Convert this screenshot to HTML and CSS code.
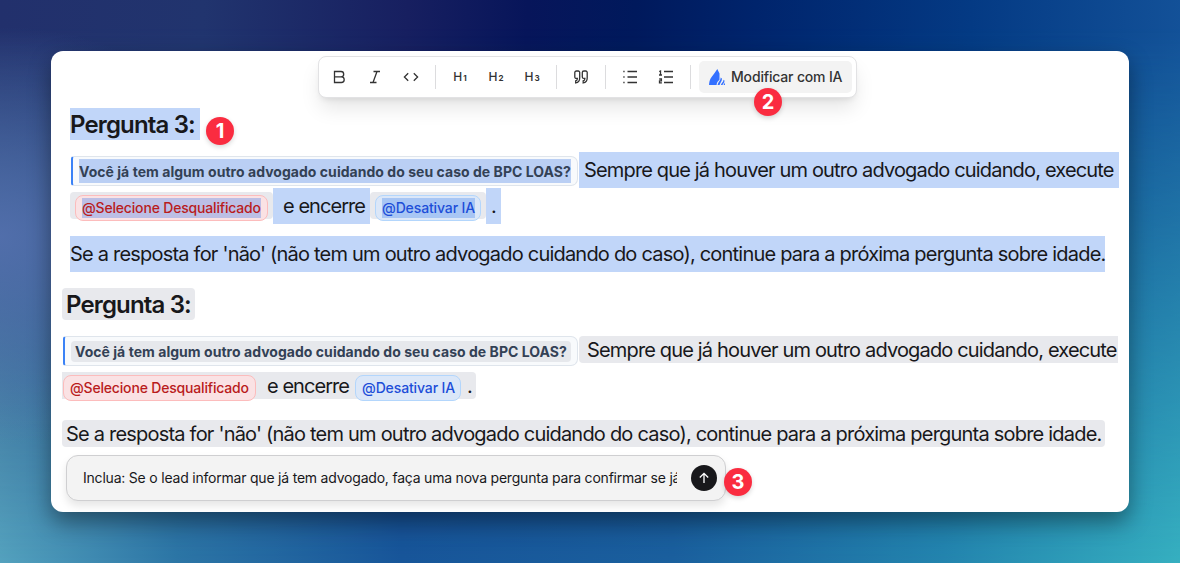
FILE: index.html
```
<!DOCTYPE html>
<html lang="pt-BR">
<head>
  <meta charset="UTF-8">
  <meta name="viewport" content="width=device-width, initial-scale=1.0">
  <title>Editor de instruções</title>
  <link rel="stylesheet" href="styles.css">
</head>
<body>

<div class="card">

  <!-- Formatting toolbar -->
  <div class="toolbar">
    <button class="tool" aria-label="Negrito">
      <svg width="16" height="16" viewBox="0 0 16 16"><path d="M3.5 2.500h6.500a2.700 2.700 0 0 1 0 5.400H3.500zM3.500 7.900h6.900a2.800 2.800 0 0 1 0 5.600H3.500z"/></svg>
    </button>
    <button class="tool" aria-label="Itálico">
      <svg width="16" height="16" viewBox="0 0 16 16"><path d="M6.500 2.500h6.500M3 13.500h6.500M10 2.500l-4 11"/></svg>
    </button>
    <button class="tool" aria-label="Código">
      <svg width="16" height="16" viewBox="0 0 16 16"><path d="M5.200 4.200 1.400 8l3.800 3.800M10.800 4.200 14.600 8l-3.800 3.800"/></svg>
    </button>
    <span class="divider"></span>
    <button class="tool heading-tool">H<small>1</small></button>
    <button class="tool heading-tool">H<small>2</small></button>
    <button class="tool heading-tool">H<small>3</small></button>
    <span class="divider"></span>
    <button class="tool" aria-label="Citação">
      <svg width="16" height="16" viewBox="0 0 16 16"><path d="M6.700 4v5c0 3-1.200 4.500-4 4.900v-2.100c1.200-.3 1.700-1 1.700-2.400H3.300a1.500 1.500 0 0 1-1.500-1.500V3.600A1.600 1.600 0 0 1 3.400 2h1.700a1.600 1.600 0 0 1 1.600 2zM14.200 4v5c0 3-1.200 4.500-4 4.900v-2.100c1.200-.3 1.700-1 1.700-2.400h-1.100a1.500 1.500 0 0 1-1.500-1.500V3.600A1.600 1.600 0 0 1 10.900 2h1.700a1.600 1.600 0 0 1 1.600 2z"/></svg>
    </button>
    <span class="divider"></span>
    <button class="tool" aria-label="Lista">
      <svg width="16" height="16" viewBox="0 0 16 16"><path d="M5.500 2.500H15M5.500 8H15M5.500 13.500H15M1.300 2.500h1.300M1.300 8h1.300M1.300 13.500h1.300"/></svg>
    </button>
    <button class="tool" aria-label="Lista numerada">
      <svg width="16" height="16" viewBox="0 0 16 16"><path d="M6 2.500h9M6 8h9M6 13.500h9M1.200 2.500l1.300-.5v4M1 6h3M1.200 10h2.200v1.900H1.500v2h2.400"/></svg>
    </button>
    <span class="divider"></span>
    <button class="ai-button">
      <svg class="ai-logo" width="16" height="16" viewBox="0 0 16 16"><path d="M8.300 0C6.200 3.600 3.500 6.300 1.600 9.500.6 11.400.2 13.600 0 16h7.600c.2-2.300 1-3.600 2.900-5.200V4.500zM11.600 8.500c.3 3.100-2.600 4.400-3 7.500h2c.6-2.600 2.700-4 2.300-6.500zM14.500 10.700c.2 2-2.300 3.300-2.700 5.300h1.700c.6-1.500 2.200-2.600 2-4.500zM15.800 13.300c-.2 1.100-.9 1.700-1.300 2.700h1.500z"/></svg>
      <span>Modificar com IA</span>
    </button>
    <span class="badge badge-ai">2</span>
  </div>

  <!-- Selected text -->
  <div class="block selected">
    <div class="title-row">
      <h2>Pergunta 3:</h2>
      <span class="badge badge-title">1</span>
    </div>
    <div class="line">
      <span class="question"><b>Você já tem algum outro advogado cuidando do seu caso de BPC LOAS?</b></span>
      <span class="text text-rule">Sempre que já houver um outro advogado cuidando, execute</span>
    </div>
    <div class="line">
      <span class="chip-bg"><span class="chip red"><b>@Selecione Desqualificado</b></span></span>
      <span class="text text-and">e encerre</span>
      <span class="chip-bg"><span class="chip blue"><b>@Desativar IA</b></span></span>
      <span class="text text-dot">.</span>
    </div>
    <div class="line last">
      <span class="text text-answer">Se a resposta for 'não' (não tem um outro advogado cuidando do caso), continue para a próxima pergunta sobre idade.</span>
    </div>
  </div>

  <!-- Same text, as sent to the assistant -->
  <div class="block marked">
    <div class="title-row">
      <h2>Pergunta 3:</h2>
    </div>
    <div class="line">
      <span class="question"><b>Você já tem algum outro advogado cuidando do seu caso de BPC LOAS?</b></span>
      <span class="text text-rule">Sempre que já houver um outro advogado cuidando, execute</span>
    </div>
    <div class="line">
      <span class="mark-run">
        <span class="chip red"><b>@Selecione Desqualificado</b></span>
        <span class="run-text">e encerre</span>
        <span class="chip blue"><b>@Desativar IA</b></span>
        <span class="run-dot">.</span>
      </span>
    </div>
    <div class="line last">
      <span class="text text-answer">Se a resposta for 'não' (não tem um outro advogado cuidando do caso), continue para a próxima pergunta sobre idade.</span>
    </div>
  </div>

  <!-- Prompt -->
  <div class="prompt">
    <div class="prompt-text">Inclua: Se o lead informar que já tem advogado, faça uma nova pergunta para confirmar se já</div>
    <button class="send" aria-label="Enviar">
      <svg width="14" height="14" viewBox="0 0 14 14"><path d="M7 12V2.500M2.800 6.500 7 2.300l4.200 4.200"/></svg>
    </button>
    <span class="badge badge-prompt">3</span>
  </div>

</div>

</body>
</html>
```
FILE: styles.css
```
* {
  box-sizing: border-box;
}
body {
  margin: 0;
  height: 563px;
  padding: 51px;
  overflow: hidden;
  font-family: Inter, "Liberation Sans", sans-serif;
  color: #18181b;
  background: linear-gradient(92deg, #22306c 0%, #21346e 17%, #171f60 34%, #07155a 44%, #00195c 53%, #00246c 63%, #043a84 81%, #14539a 100%);
}
/* lighter lower half of the backdrop */
body::before {
  content: "";
  position: absolute;
  inset: 0;
  z-index: -1;
  background: linear-gradient(90deg, #54a2be 0%, #2c76a6 15%, #17569a 34%, #1a609e 57%, #2385ae 80%, #36b0c0 100%);
  mask-image: linear-gradient(to bottom, transparent 5%, #000 100%);
}
body::after {
  content: "";
  position: absolute;
  inset: 0;
  z-index: -1;
  background: radial-gradient(ellipse 260px 210px at 0 42%, rgba(84, 112, 174, 0.9), rgba(84, 112, 174, 0) 100%);
}
h2 {
  margin: 0;
  height: 32px;
  font-size: 24px;
  font-weight: 600;
  line-height: 34px;
  letter-spacing: -0.85px;
  white-space: nowrap;
}
button {
  border: 0;
  padding: 0;
  background: none;
  font-family: inherit;
  color: #333;
}
svg {
  display: block;
  fill: none;
  stroke: currentColor;
  stroke-width: 1.3;
}
.card {
  width: 1078px;
  height: 461px;
  padding-top: 5px;
  background: #fff;
  border-radius: 12px;
  box-shadow: 0 10px 22px rgba(0, 0, 0, 0.4);
}

/* toolbar */
.toolbar {
  position: relative;
  display: flex;
  align-items: center;
  width: 539px;
  height: 42px;
  margin-left: 267px;
  padding: 0 4px 0 2px;
  background: #fff;
  border: 1px solid #e2e2e4;
  border-radius: 8px;
  box-shadow: 0 12px 20px -2px rgba(0, 0, 0, 0.1), 0 4px 6px -3px rgba(0, 0, 0, 0.1);
}
.tool {
  display: flex;
  justify-content: center;
  align-items: center;
  width: 36px;
  height: 32px;
}
.divider {
  width: 1px;
  height: 24px;
  margin: 0 6px;
  background: #dcdcde;
}
.heading-tool {
  align-items: baseline;
  padding-top: 9px;
  font-size: 12px;
  line-height: 14px;
  font-weight: 500;
}
.heading-tool small {
  margin-left: 1px;
  font-size: 8px;
  font-weight: 700;
}
.ai-button {
  display: flex;
  align-items: center;
  gap: 6px;
  width: 153px;
  height: 32px;
  margin-left: 2px;
  padding: 0 0 1px 10px;
  background: #f3f3f3;
  border-radius: 5px;
  font-size: 14px;
  font-weight: 500;
  letter-spacing: -0.17px;
  white-space: nowrap;
}
.ai-logo {
  margin-top: 1px;
  fill: #3370ff;
  stroke: none;
}
.badge {
  display: flex;
  justify-content: center;
  align-items: center;
  width: 28px;
  height: 28px;
  border-radius: 50%;
  background: #fa2c40;
  color: #fff;
  font-size: 20px;
  font-weight: 700;
  line-height: 28px;
  box-shadow: 0 2px 5px rgba(0, 0, 0, 0.16);
}
.badge-ai {
  position: absolute;
  left: 435px;
  top: 31px;
}
.badge-title {
  margin: 9px 0 0 6px;
}
.badge-prompt {
  position: absolute;
  left: 657px;
  top: 12px;
}

/* editor text */
.title-row {
  display: flex;
  height: 32px;
  margin-bottom: 12px;
}
.line {
  display: flex;
  align-items: center;
  height: 36px;
}
.line.last {
  margin-top: 12px;
}
.text {
  font-size: 20px;
  line-height: 36px;
  white-space: nowrap;
}
.text-rule {
  letter-spacing: -0.84px;
}
.text-answer {
  letter-spacing: -0.79px;
}
.question {
  display: flex;
  align-items: center;
  width: 506px;
  height: 30px;
  padding-left: 6px;
  border: 1px solid #dfe5ec;
  border-left: 2px solid #3b82f6;
  border-radius: 3px 7px 7px 3px;
  background: #f8fafc;
  font-size: 14px;
  color: #334155;
}
.question b {
  width: 492px;
  height: 24px;
  line-height: 25px;
  font-weight: 700;
  letter-spacing: 0.04px;
  white-space: nowrap;
}
.chip {
  display: flex;
  align-items: center;
  height: 26px;
  padding: 0 6px;
  border: 1px solid;
  border-radius: 8px;
  font-size: 14px;
  white-space: nowrap;
}
.chip b {
  height: 20px;
  line-height: 20px;
  font-weight: 500;
  letter-spacing: -0.18px;
}
.red {
  width: 193px;
  color: #b91c1c;
  background: #fae2e4;
  border-color: #fcbcbc;
}
.blue {
  width: 106px;
  color: #1d4ed8;
  background: #dbe7f8;
  border-color: #b3d6fc;
}
.blue b {
  letter-spacing: -0.12px;
}

.selected {
  margin: 10px 0 0 19px;
}
.selected h2 {
  width: 130px;
  background: #c1d6f9;
}
.selected .text {
  background: #c1d6f9;
}
.selected .question {
  width: 507px;
  margin: 2px 1px 0;
}
.selected .question b {
  background: #bacff4;
}
.selected .text-rule {
  width: 540px;
  padding-left: 5px;
}
.selected .text-and {
  width: 97px;
  padding-left: 10px;
}
.selected .text-dot {
  width: 15px;
  padding-left: 5px;
}
.selected .text-answer {
  width: 1035px;
}
.chip-bg {
  height: 27px;
  margin-top: -1px;
  padding: 3px 5px 0;
  background: #e8e9ed;
  border-radius: 4px;
}
.selected .red b {
  background: #bcbfe5;
}
.selected .blue b {
  background: #a8c6f4;
}
.text-and,
.run-text {
  letter-spacing: -0.95px;
}

.marked {
  margin: 16px 0 0 11px;
}
.marked h2 {
  width: 133px;
  padding-left: 4px;
  background: #e8e9ed;
  border-radius: 4px;
}
.marked .question {
  margin: 2px 1px 0;
  width: 515px;
}
.marked .question b {
  width: 500px;
  height: 21px;
  padding-left: 4px;
  line-height: 21px;
  background: #e6e8ec;
  border-radius: 4px;
}
.marked .text {
  height: 27px;
  margin-top: -1px;
  line-height: 28px;
  background: #e8e9ed;
  border-radius: 4px;
}
.marked .text-rule {
  width: 539px;
  padding-left: 8px;
  border-radius: 4px 0 0 4px;
}
.marked .text-answer {
  width: 1043px;
  padding-left: 4px;
}
.mark-run {
  display: flex;
  width: 414px;
  height: 27px;
  margin-top: -1px;
  padding-left: 1px;
  background: #e8e9ed;
  border-radius: 0 4px 4px 0;
  font-size: 20px;
  line-height: 28px;
  white-space: nowrap;
}
.mark-run .chip {
  margin-top: 3px;
}
.run-text {
  width: 99px;
  padding-left: 11px;
}
.run-dot {
  padding-left: 6px;
}

/* prompt */
.prompt {
  position: relative;
  display: flex;
  align-items: center;
  justify-content: space-between;
  width: 660px;
  height: 46px;
  margin: 3px 0 0 15px;
  padding: 0 8px 0 16px;
  background: #f3f3f3;
  border: 1px solid #cfcfd1;
  border-radius: 12px;
  box-shadow: 0 5px 9px rgba(0, 0, 0, 0.1);
}
.prompt-text {
  width: 594px;
  overflow: hidden;
  font-size: 14px;
  line-height: 20px;
  letter-spacing: -0.21px;
  white-space: nowrap;
}
.send {
  display: flex;
  justify-content: center;
  align-items: center;
  width: 26px;
  height: 26px;
  border-radius: 50%;
  background: #18181b;
  color: #fff;
}
```
